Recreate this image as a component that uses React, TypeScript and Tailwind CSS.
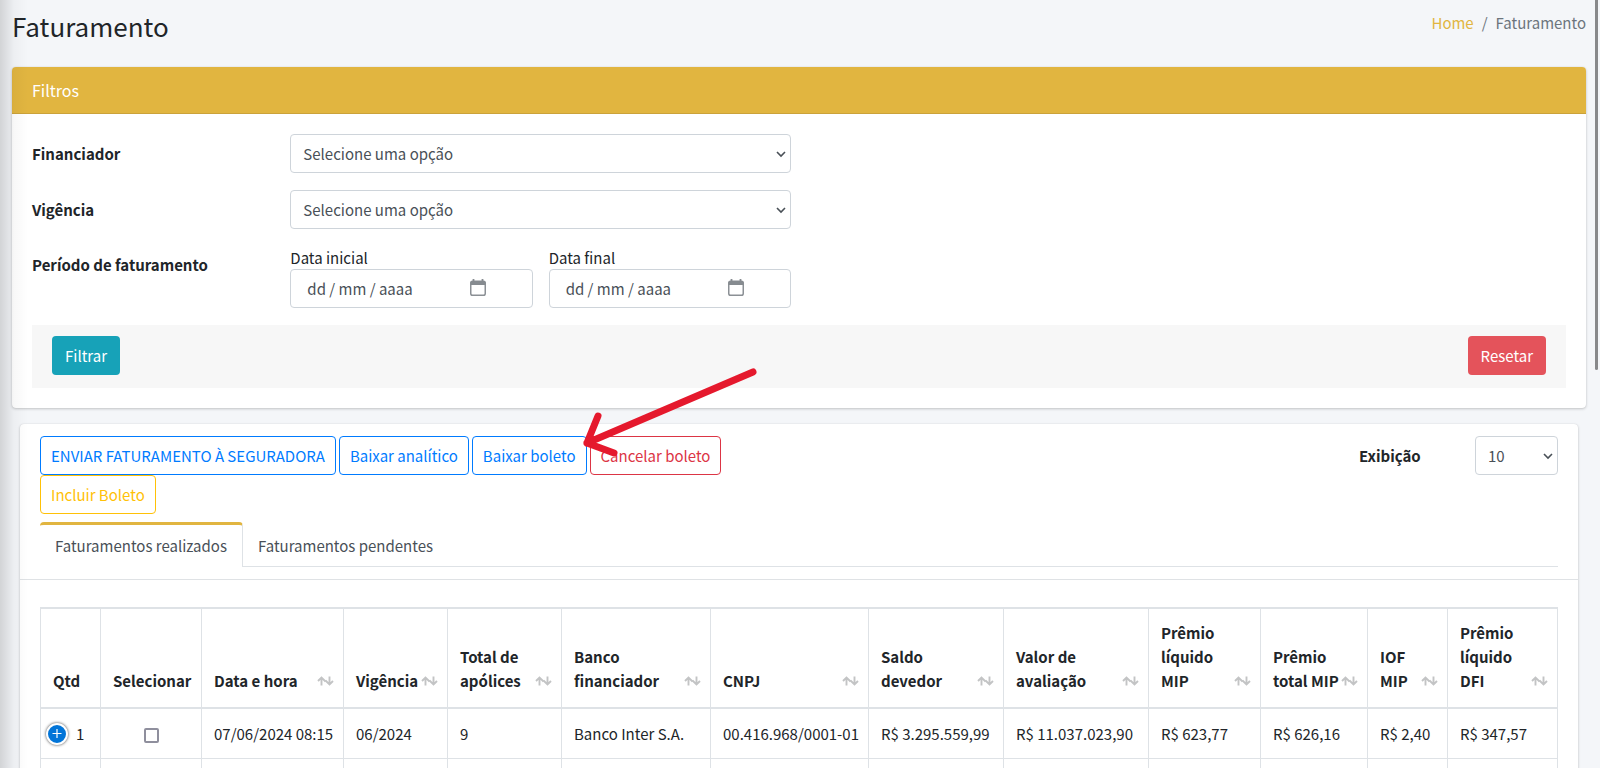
import React from 'react';

interface Column {
  title: string;
  width: string;
  sortable: boolean;
}

const COLUMNS: Column[] = [
  { title: 'Qtd', width: 'w-[60px]', sortable: false },
  { title: 'Selecionar', width: 'w-[101px]', sortable: false },
  { title: 'Data e hora', width: 'w-[142px]', sortable: true },
  { title: 'Vigência', width: 'w-[104px]', sortable: true },
  { title: 'Total de apólices', width: 'w-[114px]', sortable: true },
  { title: 'Banco financiador', width: 'w-[149px]', sortable: true },
  { title: 'CNPJ', width: 'w-[158px]', sortable: true },
  { title: 'Saldo devedor', width: 'w-[135px]', sortable: true },
  { title: 'Valor de avaliação', width: 'w-[145px]', sortable: true },
  { title: 'Prêmio líquido MIP', width: 'w-[112px]', sortable: true },
  { title: 'Prêmio total MIP', width: 'w-[107px]', sortable: true },
  { title: 'IOF MIP', width: 'w-[80px]', sortable: true },
  { title: 'Prêmio líquido DFI', width: 'w-[110px]', sortable: true },
];

const ROW = [
  '07/06/2024 08:15',
  '06/2024',
  '9',
  'Banco Inter S.A.',
  '00.416.968/0001-01',
  'R$ 3.295.559,99',
  'R$ 11.037.023,90',
  'R$ 623,77',
  'R$ 626,16',
  'R$ 2,40',
  'R$ 347,57',
];

const Chevron = () => (
  <svg
    className="pointer-events-none absolute top-4 right-[5px] h-2 w-[10px]"
    viewBox="0 0 10 8"
    fill="none"
    stroke="#495057"
    strokeWidth="1.6"
    aria-hidden="true"
  >
    <path d="M1 2 5 6 9 2" />
  </svg>
);

const SortIcon = () => (
  <svg
    className="absolute right-[9px] bottom-[21px] h-[10px] w-[17px]"
    viewBox="0 0 17 10"
    fill="none"
    stroke="#c3c4c5"
    strokeWidth="1.9"
    aria-hidden="true"
  >
    <path d="M4.5 9.5V1.5M1 5 4.5 1.5 8.5 5.5M12.5 .5v8M8.5 4.5l4 4L16 5" />
  </svg>
);

const CalendarIcon = () => (
  <svg
    className="pointer-events-none absolute top-[10px] right-[47px] h-[17px] w-4"
    viewBox="0 0 16 17"
    fill="none"
    aria-hidden="true"
  >
    <rect x="0.75" y="2.25" width="14.5" height="14" rx="1.8" stroke="#8b9095" strokeWidth="1.5" />
    <path d="M0.5 3.5Q0.5 2 2.3 2H13.7Q15.5 2 15.5 3.5V6H0.5Z" fill="#868b90" />
    <path d="M3.5 0v3M12.5 0v3" stroke="#868b90" strokeWidth="1.8" />
  </svg>
);

interface SelectFieldProps {
  id: string;
  option: string;
}

const SelectField: React.FC<SelectFieldProps> = ({ id, option }) => (
  <div className="relative">
    <select
      id={id}
      className="block h-[39px] w-full appearance-none rounded border border-[#ced4da] bg-white pr-6 pl-3 text-[#495057]"
    >
      <option>{option}</option>
    </select>
    <Chevron />
  </div>
);

interface DateFieldProps {
  id: string;
  label: string;
}

const DateField: React.FC<DateFieldProps> = ({ id, label }) => (
  <div className="col-span-2">
    <label htmlFor={id} className="block leading-[23px]">
      {label}
    </label>
    <div className="relative">
      <input
        id={id}
        type="text"
        placeholder="dd / mm / aaaa"
        className="block h-[39px] w-full rounded border border-[#ced4da] bg-white px-4 text-[#495057] placeholder:text-[#495057]"
      />
      <CalendarIcon />
    </div>
  </div>
);

const OUTLINE_BUTTON = 'h-[39px] rounded border px-[10px]';

const Arrow = () => (
  <svg
    className="pointer-events-none absolute -top-[72px] left-[108px] z-10 h-24 w-[184px]"
    viewBox="0 0 184 96"
    fill="none"
    stroke="#e5192d"
    strokeWidth="7"
    strokeLinecap="round"
    strokeLinejoin="round"
    aria-hidden="true"
  >
    <path d="M173 8 7 79M18 52 7 79l27 10" />
  </svg>
);

const Filters = () => (
  <section className="rounded bg-white shadow-[0_0_1px_rgba(0,0,0,0.13),0_1px_3px_rgba(0,0,0,0.2)]">
    <h2 className="rounded-t border-b border-[#cba23a] bg-[#e1b540] px-5 py-[11px] text-base leading-6 text-white">
      Filtros
    </h2>
    <div className="p-5">
      <div className="grid grid-cols-12 gap-4">
        <label htmlFor="financiador" className="col-span-2 py-2 font-bold">
          Financiador
        </label>
        <div className="col-span-4">
          <SelectField id="financiador" option="Selecione uma opção" />
        </div>
        <label htmlFor="vigencia" className="col-span-2 col-start-1 py-2 font-bold">
          Vigência
        </label>
        <div className="col-span-4">
          <SelectField id="vigencia" option="Selecione uma opção" />
        </div>
        <span className="col-span-2 col-start-1 py-[7px] font-bold">Período de faturamento</span>
        <DateField id="inicio" label="Data inicial" />
        <DateField id="fim" label="Data final" />
      </div>
      <div className="mt-[17px] flex justify-between bg-[#f7f7f7] px-5 pt-[11px] pb-[13px]">
        <button className="h-[39px] rounded bg-[#17a2b8] px-[13px] text-white">Filtrar</button>
        <button className="h-[39px] rounded bg-[#e4535b] px-[13px] text-white">Resetar</button>
      </div>
    </div>
  </section>
);

const BillingTable = () => (
  <table className="w-full table-fixed border-collapse border border-[#dee2e6] text-left">
    <thead>
      <tr className="border-y-2 border-[#dee2e6]">
        {COLUMNS.map((column) => (
          <th
            key={column.title}
            className={`${column.width} relative border-x border-[#dee2e6] pt-3 pb-[14px] pl-3 align-bottom font-bold ${
              column.sortable ? 'pr-6' : ''
            }`}
          >
            {column.title}
            {column.sortable && <SortIcon />}
          </th>
        ))}
      </tr>
    </thead>
    <tbody>
      <tr className="border-b border-[#dee2e6]">
        <td className="border-x border-[#dee2e6] pt-[13px] pb-3">
          <div className="flex items-center gap-2 pl-[5px]">
            <button
              aria-label="Expandir linha"
              className="flex size-[22px] items-center justify-center rounded-full border-2 border-white bg-[#0275d8] text-white shadow-[0_0_3px_#444]"
            >
              <svg className="size-3" viewBox="0 0 12 12" stroke="currentColor" strokeWidth="1.2" aria-hidden="true">
                <path d="M6 1v9M1.5 5.5h9" />
              </svg>
            </button>
            1
          </div>
        </td>
        <td className="border-x border-[#dee2e6] text-center">
          <input
            type="checkbox"
            aria-label="Selecionar"
            className="size-[15px] appearance-none rounded-[2px] border-2 border-[#8f8f9d] bg-white align-middle"
          />
        </td>
        {ROW.map((value, index) => (
          <td key={index} className="border-x border-[#dee2e6] pt-[13px] pb-3 pl-3 whitespace-nowrap">
            {value}
          </td>
        ))}
      </tr>
      <tr>
        {COLUMNS.map((column) => (
          <td key={column.title} className="h-12 border-x border-[#dee2e6]" />
        ))}
      </tr>
    </tbody>
  </table>
);

const Billing = () => (
  <section className="mx-2 mt-4 rounded bg-white shadow-[0_0_1px_rgba(0,0,0,0.13),0_1px_3px_rgba(0,0,0,0.2)]">
    <div className="border-b border-[#dfe2e5] px-5 py-3">
      <div className="flex items-start justify-between">
        <div className="flex w-1/2 flex-wrap gap-x-[3px]">
          <button className={`${OUTLINE_BUTTON} border-[#007bff] text-[#007bff]`}>
            ENVIAR FATURAMENTO À SEGURADORA
          </button>
          <button className={`${OUTLINE_BUTTON} border-[#007bff] text-[#007bff]`}>Baixar analítico</button>
          <div className="relative">
            <button className={`${OUTLINE_BUTTON} border-[#007bff] text-[#007bff]`}>Baixar boleto</button>
            <Arrow />
          </div>
          <button className={`${OUTLINE_BUTTON} border-[#dc3545] text-[#dc3545]`}>Cancelar boleto</button>
          <button className={`${OUTLINE_BUTTON} border-[#ffc107] text-[#ffc107]`}>Incluir Boleto</button>
        </div>
        <div className="flex w-[199px]">
          <label htmlFor="exibicao" className="w-[116px] py-2 font-bold">
            Exibição
          </label>
          <div className="flex-1">
            <SelectField id="exibicao" option="10" />
          </div>
        </div>
      </div>
      <nav className="mt-2 flex border-b border-[#dee2e6]">
        <a
          href="#realizados"
          className="-mb-px rounded-t border-t-[3px] border-r border-t-[#e1b540] border-r-[#dee2e6] bg-white px-[15px] py-[9px] text-[#495057]"
        >
          Faturamentos realizados
        </a>
        <a href="#pendentes" className="px-[15px] pt-3 pb-2 text-[#495057]">
          Faturamentos pendentes
        </a>
      </nav>
    </div>
    <div className="px-5 pt-[27px]">
      <BillingTable />
    </div>
  </section>
);

const App: React.FC = () => {
  return (
    <div className="relative h-screen overflow-hidden bg-[#f4f6f9] font-['Noto_Sans_CJK_SC','Open_Sans',sans-serif] text-[15px] leading-6 text-[#212529]">
      <header className="flex items-start justify-between pt-[6px] pr-[14px] pb-[21px] pl-3">
        <h1 className="text-[26px] leading-10">Faturamento</h1>
        <nav className="flex gap-2 pt-[5px]" aria-label="Breadcrumb">
          <a href="#home" className="text-[#e1b540]">
            Home
          </a>
          <span className="text-[#6c757d]">/</span>
          <span className="text-[#6c757d]">Faturamento</span>
        </nav>
      </header>
      <main className="pr-[14px] pl-3">
        <Filters />
        <Billing />
      </main>
      {/* Shadow cast by the collapsed sidebar */}
      <div className="pointer-events-none absolute inset-y-0 left-0 w-7 bg-linear-to-r from-black/14 via-black/3 to-transparent" />
      <div className="absolute top-0 right-[2px] h-[370px] w-[3px] rounded-b bg-[#88898b]" />
    </div>
  );
};

export default App;
